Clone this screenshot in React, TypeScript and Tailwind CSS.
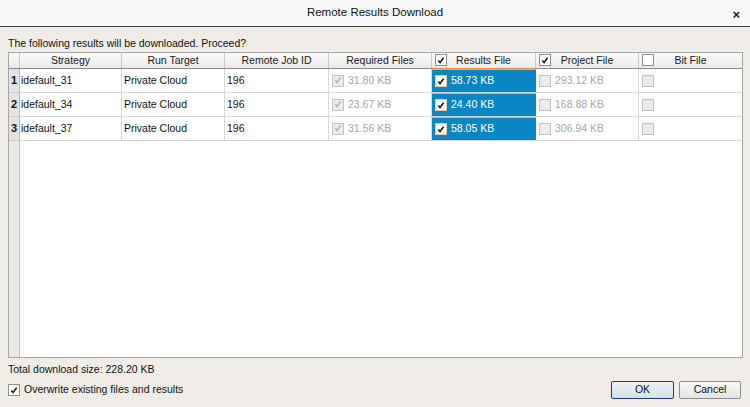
import React from 'react';

type Row = {
  n: number;
  strategy: string;
  target: string;
  job: string;
  required: string;
  results: string;
  project: string;
};

const rows: Row[] = [
  { n: 1, strategy: 'idefault_31', target: 'Private Cloud', job: '196', required: '31.80 KB', results: '58.73 KB', project: '293.12 KB' },
  { n: 2, strategy: 'idefault_34', target: 'Private Cloud', job: '196', required: '23.67 KB', results: '24.40 KB', project: '168.88 KB' },
  { n: 3, strategy: 'idefault_37', target: 'Private Cloud', job: '196', required: '31.56 KB', results: '58.05 KB', project: '306.94 KB' },
];

const font = { fontFamily: '"Liberation Sans", Arial, sans-serif' };

function Tick({ color = '#111' }: { color?: string }) {
  return (
    <svg viewBox="0 0 11 11" className="h-[11px] w-[11px]">
      <path d="M2.6 5.6 L4.4 7.8 L8.4 2.4" fill="none" stroke={color} strokeWidth="1.7" />
    </svg>
  );
}

/** 复选框：normal / disabled 两种外观 */
function Box({ checked, disabled, hot }: { checked?: boolean; disabled?: boolean; hot?: boolean }) {
  const cls = disabled
    ? 'border-[#c4c4c4] bg-[#ececec]'
    : hot
      ? 'border-[#f2c9a4] bg-white'
      : 'border-[#8f8f8f] bg-white';
  return (
    <span className={`flex h-[12px] w-[12px] shrink-0 items-center justify-center border ${cls}`}>
      {checked && <Tick color={disabled ? '#b0b0b0' : '#111'} />}
    </span>
  );
}

function Th({ children, check, last }: { children: React.ReactNode; check?: boolean; last?: boolean }) {
  return (
    <div
      className={`relative flex h-[15px] items-center border-[#c9c9c9] bg-gradient-to-b from-[#fbfbfb] to-[#eaeaea] ${last ? '' : 'border-r'}`}
    >
      {check !== undefined && (
        <span className="absolute left-[3px] top-[1px]">
          <Box checked={check} />
        </span>
      )}
      <span className="w-full text-center text-[10.5px] text-[#1a1a1a]">{children}</span>
    </div>
  );
}

const cols = 'grid-cols-[102px_103px_104px_103px_104px_103px_1fr]';

export default function App() {
  return (
    <div className="flex h-[407px] w-[750px] flex-col overflow-hidden bg-[#f0ede9]" style={font}>
      {/* title bar */}
      <div className="relative flex h-[27px] shrink-0 items-center justify-center border-b border-[#3d3d3d] bg-[#f8f8f8]">
        <span className="text-[11.5px] text-[#111]">Remote Results Download</span>
        <span className="absolute right-[10px] top-[5px] text-[13px] font-bold text-[#222]">×</span>
      </div>

      <div className="flex flex-1 flex-col px-[8px] pb-[7px]">
        <div className="mt-[8px] h-[16px] text-[10.5px] leading-[16px] text-[#111]">
          The following results will be downloaded. Proceed?
        </div>

        {/* table */}
        <div className="mt-[1px] flex h-[306px] w-[735px] flex-col border border-[#a7a7a7] bg-white">
          <div className="flex border-b border-[#8c8c8c]">
            <div className="h-[15px] w-[11px] shrink-0 border-r border-[#c9c9c9] bg-gradient-to-b from-[#fbfbfb] to-[#eaeaea]" />
            <div className={`grid flex-1 ${cols}`}>
              <Th>Strategy</Th>
              <Th>Run Target</Th>
              <Th>Remote Job ID</Th>
              <Th>Required Files</Th>
              <div className="relative">
                <Th check>Results File</Th>
                <span className="absolute bottom-[-1px] left-0 h-[1px] w-full bg-[#f0913f]" />
              </div>
              <Th check>Project File</Th>
              <Th check={false} last>
                Bit File
              </Th>
            </div>
          </div>

          <div className="flex flex-1">
            <div className="flex w-[11px] shrink-0 flex-col border-r border-[#bdbdbd] bg-[#e9e9e9]">
              {rows.map((r) => (
                <div
                  key={r.n}
                  className="flex h-[24px] items-center justify-center border-b border-[#cfcfcf] bg-[#e3e3e3] text-[11px] font-bold text-[#111]"
                >
                  {r.n}
                </div>
              ))}
            </div>
            <div className="flex-1">
              {rows.map((r) => (
                <div key={r.n} className={`grid h-[24px] ${cols} border-b border-[#d8d8d8] text-[10.5px]`}>
                  <div className="flex items-center border-r border-[#d8d8d8] pl-[1px] text-[#111]">{r.strategy}</div>
                  <div className="flex items-center border-r border-[#d8d8d8] pl-[2px] text-[#111]">{r.target}</div>
                  <div className="flex items-center border-r border-[#d8d8d8] pl-[2px] text-[#111]">{r.job}</div>
                  <div className="flex items-center gap-[4px] border-r border-[#d8d8d8] pl-[3px] text-[#a8a8a8]">
                    <Box checked disabled />
                    {r.required}
                  </div>
                  <div className="flex items-center gap-[4px] border-t border-[#f3a766] bg-[#0a86c4] pl-[3px] text-white">
                    <Box checked hot />
                    {r.results}
                  </div>
                  <div className="flex items-center gap-[4px] border-r border-[#d8d8d8] pl-[3px] text-[#a8a8a8]">
                    <Box disabled />
                    {r.project}
                  </div>
                  <div className="flex items-center pl-[3px]">
                    <Box disabled />
                  </div>
                </div>
              ))}
            </div>
          </div>
        </div>

        <div className="mt-[4px] h-[15px] text-[10.5px] leading-[15px] text-[#111]">Total download size: 228.20 KB</div>

        <div className="mt-[4px] flex items-center justify-between">
          <label className="flex items-center gap-[4px] text-[10.5px] text-[#111]">
            <Box checked />
            Overwrite existing files and results
          </label>
          <div className="flex gap-[5px] pr-[1px]">
            <button
              type="button"
              className="h-[18px] w-[63px] rounded-[2px] border border-[#1e3e73] bg-gradient-to-b from-[#edf3f6] to-[#d4e1e8] text-[10.5px] text-[#111]"
            >
              OK
            </button>
            <button
              type="button"
              className="h-[18px] w-[62px] rounded-[2px] border border-[#8d8d8d] bg-gradient-to-b from-[#f8f8f8] to-[#e4e4e4] text-[10.5px] text-[#111]"
            >
              Cancel
            </button>
          </div>
        </div>
      </div>
    </div>
  );
}
